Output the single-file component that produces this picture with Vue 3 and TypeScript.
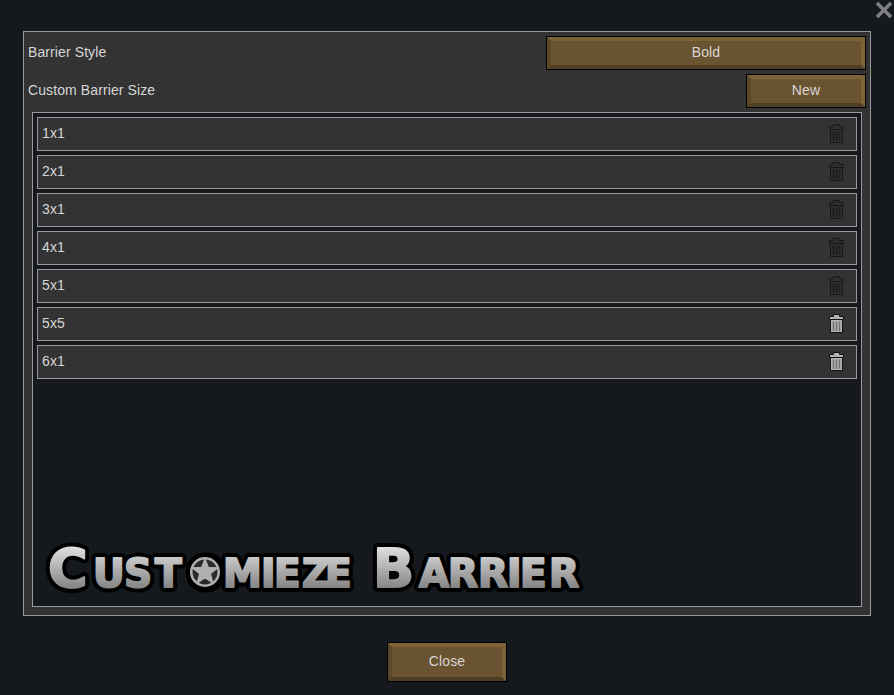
<script setup lang="ts">
interface BarrierSize {
  name: string
  removable: boolean
}

const sizes: BarrierSize[] = [
  { name: '1x1', removable: false },
  { name: '2x1', removable: false },
  { name: '3x1', removable: false },
  { name: '4x1', removable: false },
  { name: '5x1', removable: false },
  { name: '5x5', removable: true },
  { name: '6x1', removable: true }
]
</script>

<template>
  <div class="window">
    <button class="close-x" aria-label="close">
      <svg width="20" height="20" viewBox="0 0 20 20">
        <path d="M3 3 L17 17 M17 3 L3 17" stroke="#7d7f81" stroke-width="3.6" fill="none" />
      </svg>
    </button>

    <div class="panel">
      <div class="setting">
        <span class="label">Barrier Style</span>
        <button class="btn wide"><span class="bevel">Bold</span></button>
      </div>
      <div class="setting">
        <span class="label">Custom Barrier Size</span>
        <button class="btn"><span class="bevel">New</span></button>
      </div>

      <div class="list">
        <div v-for="size in sizes" :key="size.name" class="row">
          <span class="label">{{ size.name }}</span>
          <svg class="trash" :class="{ on: size.removable }" width="18" height="22" viewBox="0 0 18 22">
            <path class="lid" d="M5.500 3.500V1.500H11.500V3.500H15.500V6.500H1.500V3.500Z" />
            <path class="can" d="M2.500 6.500H14.500V19.500H2.500Z" />
            <path class="bars" d="M5.500 8.500V18M8.500 8.500V18M11.500 8.500V18" />
          </svg>
        </div>

        <svg class="logo" width="560" height="76" viewBox="0 0 560 76">
          <defs>
            <linearGradient id="logoFill" gradientUnits="userSpaceOnUse" x1="0" y1="19" x2="0" y2="60">
              <stop offset="0" stop-color="#e0e0e0" />
              <stop offset="1" stop-color="#858585" />
            </linearGradient>
            <text id="logoWords" font-size="39" y="58.500"><tspan font-size="54" x="13" y="59">C</tspan><tspan x="58 89 120 154 188 226 239 267 290" y="58.500">USTOMIEZE</tspan><tspan font-size="54" x="320 338" y="59"> B</tspan><tspan x="384 413 443 472 485 514" y="58.500">ARRIER</tspan></text>
          </defs>
          <use class="logo-halo" href="#logoWords" />
          <use class="logo-face" href="#logoWords" />
          <circle class="wheel" cx="170" cy="44" r="17" />
          <circle class="wheel-hole" cx="170" cy="44" r="12.500" />
          <path class="wheel-star" d="M170 31 173.200 39.600 182.400 40 175.200 45.700 177.600 54.500 170 49.500 162.400 54.500 164.800 45.700 157.600 40 166.800 39.600Z" />
        </svg>
      </div>
    </div>

    <div class="footer">
      <button class="btn"><span class="bevel">Close</span></button>
    </div>
  </div>
</template>

<style scoped>
.window {
  position: relative;
  width: 894px;
  height: 695px;
  padding: 31px 23px 0;
  box-sizing: border-box;
  background: #15191e;
  color: #d6d6d6;
  font-family: "Liberation Sans", Arial, sans-serif;
  font-size: 14px;
  letter-spacing: 0.1px;
  overflow: hidden;
}

.close-x {
  position: absolute;
  top: 0;
  right: 0;
  width: 20px;
  height: 20px;
  padding: 0;
  border: 0;
  background: none;
}

.panel {
  display: flex;
  flex-direction: column;
  gap: 4px;
  width: 848px;
  height: 585px;
  padding: 4px;
  box-sizing: border-box;
  border: 1px solid #999;
  background: #333;
}

.setting {
  display: flex;
  align-items: center;
  justify-content: space-between;
  height: 34px;
}

.label {
  padding-bottom: 2px;
}

.btn {
  display: block;
  width: 120px;
  height: 34px;
  padding: 0;
  border: 1px solid #000;
  background: #6a5330;
  color: #d6d6d6;
  font: inherit;
  letter-spacing: inherit;
}

.btn.wide {
  width: 320px;
}

.footer .btn {
  height: 40px;
}

.bevel {
  display: flex;
  align-items: center;
  justify-content: center;
  height: 100%;
  padding-bottom: 2px;
  box-sizing: border-box;
  border-style: solid;
  border-width: 4px;
  border-color: #7d6337 #7d6337 #4f3f25 #5d4929;
}

.list {
  position: relative;
  display: flex;
  flex-direction: column;
  gap: 4px;
  flex: 1;
  margin: 0 4px 4px;
  padding: 4px;
  border: 1px solid #999;
  background: #15191e;
}

.row {
  display: flex;
  align-items: center;
  justify-content: space-between;
  height: 34px;
  padding: 0 10px 0 4px;
  box-sizing: border-box;
  border: 1px solid #999;
  background: #333;
}

.trash .lid,
.trash .can {
  fill: #2e2e2e;
  stroke: #181818;
}

.trash .bars {
  fill: none;
  stroke: #1c1c1c;
  stroke-width: 1.5;
}

.trash.on .lid,
.trash.on .can {
  fill: #b4b4b4;
  stroke: #111;
}

.trash.on .bars {
  stroke: #6e6e6e;
}

.logo {
  position: absolute;
  left: 2px;
  bottom: 2px;
  font-family: "DejaVu Sans", sans-serif;
  font-weight: 700;
  letter-spacing: 0;
}

.logo-halo {
  fill: #000;
  stroke: #000;
  stroke-width: 10;
  stroke-linejoin: round;
}

.logo-face {
  fill: url(#logoFill);
  stroke: url(#logoFill);
  stroke-width: 2;
  stroke-linejoin: round;
}

.wheel {
  fill: #b0b0b0;
  stroke: #000;
  stroke-width: 4;
}

.wheel-hole {
  fill: #2a2a2a;
}

.wheel-star {
  fill: #b0b0b0;
  stroke: #b0b0b0;
  stroke-width: 1.5;
  stroke-linejoin: round;
}

.footer {
  display: flex;
  justify-content: center;
  padding-top: 26px;
}
</style>

<style>
body {
  background: #15191e;
}
</style>
